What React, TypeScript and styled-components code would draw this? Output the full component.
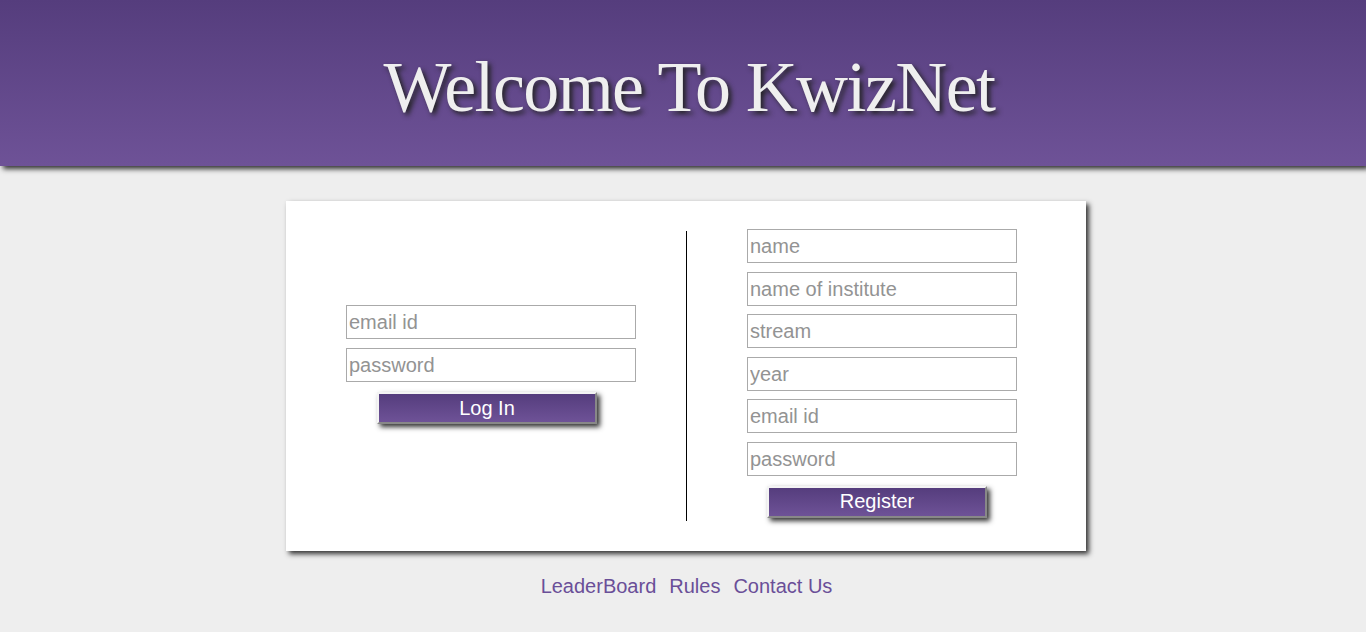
import React from "react";
import styled, { createGlobalStyle } from "styled-components";

const Global = createGlobalStyle`
  html, body { margin: 0; padding: 0; background: #eeeeee; }
  body { font-family: "Liberation Sans", Arial, sans-serif; }
  * { box-sizing: border-box; }
`;

const Header = styled.header`
  height: 166px;
  background: linear-gradient(to bottom, #553d7d, #6e5297);
  box-shadow: 3px 3px 5px #333;
  display: flex;
  align-items: center;
  justify-content: center;
  padding-left: 12px;
`;

const Title = styled.h1`
  margin: 0;
  font-family: "Liberation Serif", "Times New Roman", serif;
  font-weight: normal;
  font-size: 72px;
  letter-spacing: -1.6px;
  color: #efefef;
  text-shadow: 3px 3px 5px #222;
  line-height: 1;
  padding-top: 8px;
`;

const Main = styled.main`
  display: flex;
  flex-direction: column;
  align-items: center;
  padding-top: 35px;
  padding-left: 6px;
`;

const Card = styled.section`
  width: 800px;
  height: 350px;
  background: #fff;
  box-shadow: 3px 3px 5px #333;
  display: grid;
  grid-template-columns: 400px 400px;
  padding: 30px 0;
`;

const LeftCol = styled.div`
  display: flex;
  flex-direction: column;
  align-items: flex-start;
  padding-left: 60px;
  padding-top: 74px;
  gap: 9px;
`;

const RightCol = styled.div`
  border-left: 1px solid #000;
  display: flex;
  flex-direction: column;
  align-items: flex-start;
  padding-left: 60px;
`;

const RightInner = styled.div`
  display: flex;
  flex-direction: column;
  align-items: flex-start;
  gap: 8.6px;
  margin-top: -2px;
`;

const Input = styled.input<{ $w: number }>`
  width: ${(p) => p.$w}px;
  height: 34px;
  border: 1px solid #aaaaaa;
  padding: 1px 2px 0;
  font-family: "Liberation Sans", Arial, sans-serif;
  font-size: 20px;
  color: #333;
  outline: none;
  &::placeholder { color: #939393; }
`;

const Button = styled.button<{ $ml: number }>`
  width: 220px;
  height: 32px;
  margin-left: ${(p) => p.$ml}px;
  margin-top: 1px;
  background: linear-gradient(to bottom, #553d7d, #6e5297);
  color: #fff;
  font-family: "Liberation Sans", Arial, sans-serif;
  font-size: 20px;
  border: 2px solid;
  border-color: #f4f4f4 #888 #888 #f4f4f4;
  box-shadow: 3px 3px 5px #333;
  padding: 0;
  cursor: pointer;
`;

const Links = styled.nav`
  display: flex;
  gap: 13px;
  margin-top: 24px;
  padding-left: 1px;
`;

const Link = styled.a`
  color: #6a4f98;
  font-size: 20px;
  text-decoration: none;
  font-family: "Liberation Sans", Arial, sans-serif;
`;

export default function App() {
  return (
    <>
      <Global />
      <Header>
        <Title>Welcome To KwizNet</Title>
      </Header>
      <Main>
        <Card>
          <LeftCol>
            <Input $w={290} placeholder="email id" />
            <Input $w={290} type="password" placeholder="password" />
            <Button $ml={31}>Log In</Button>
          </LeftCol>
          <RightCol>
            <RightInner>
              <Input $w={270} placeholder="name" />
              <Input $w={270} placeholder="name of institute" />
              <Input $w={270} placeholder="stream" />
              <Input $w={270} placeholder="year" />
              <Input $w={270} placeholder="email id" />
              <Input $w={270} type="password" placeholder="password" />
              <Button $ml={20}>Register</Button>
            </RightInner>
          </RightCol>
        </Card>
        <Links>
          <Link href="#">LeaderBoard</Link>
          <Link href="#">Rules</Link>
          <Link href="#">Contact Us</Link>
        </Links>
      </Main>
    </>
  );
}
